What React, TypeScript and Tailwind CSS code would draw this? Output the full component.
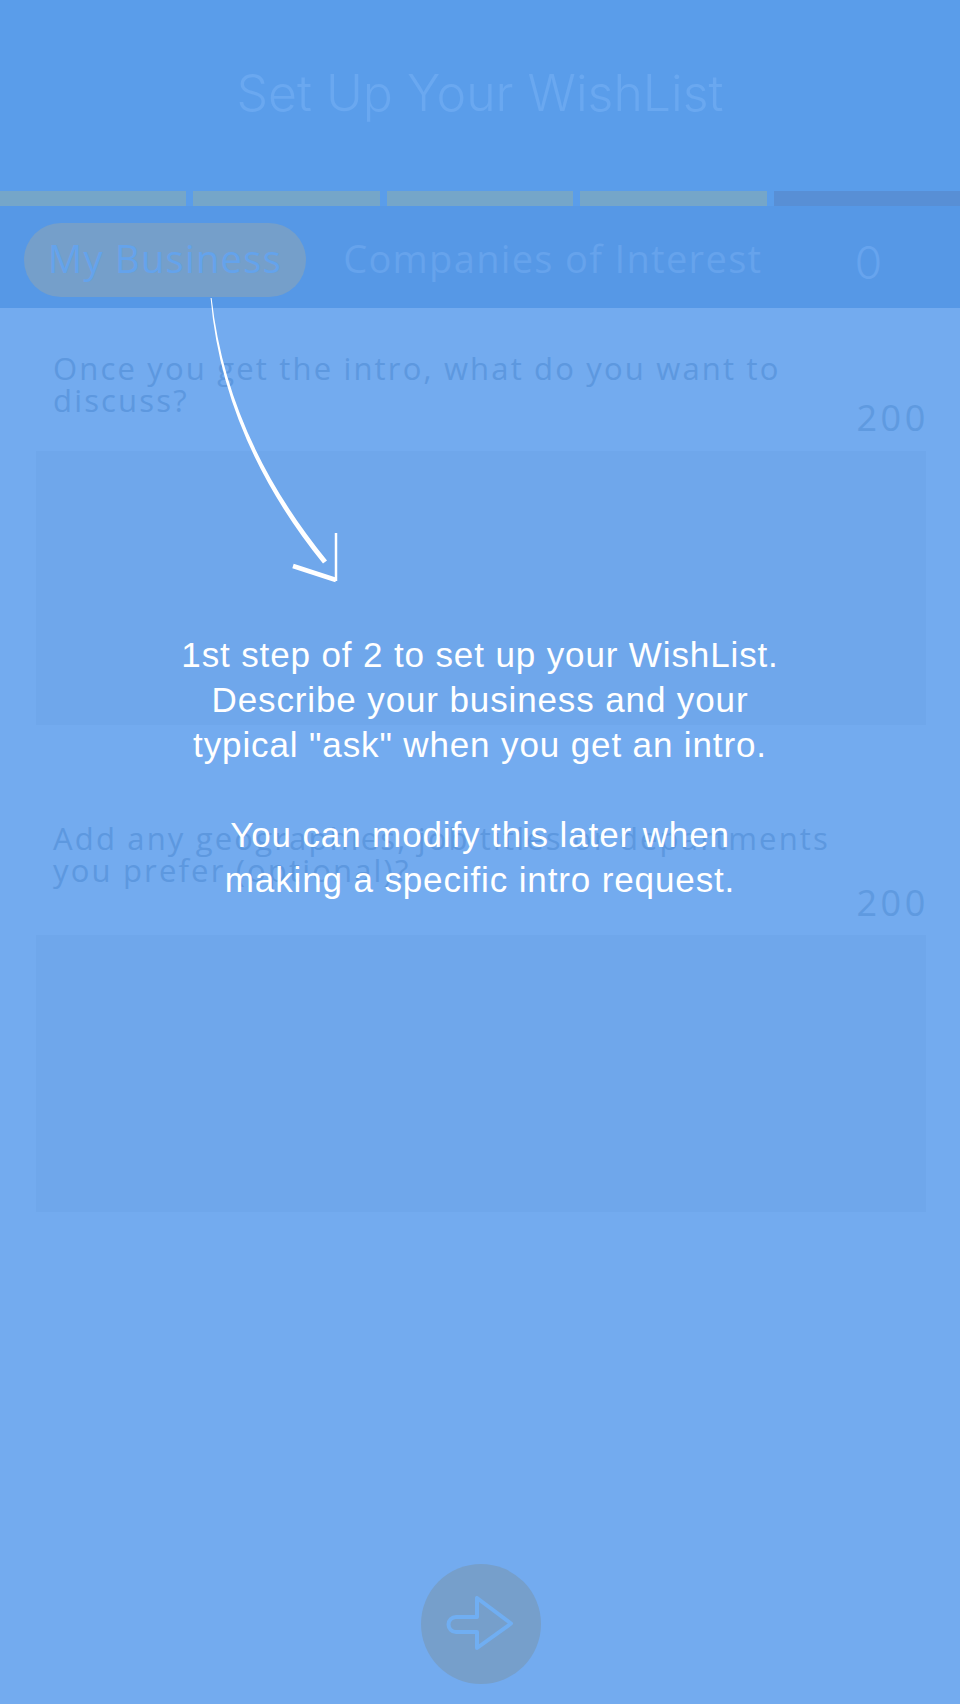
import { ReactNode } from "react"

const gotham = { fontFamily: '"Open Sans", "Noto Sans", sans-serif' }

function ProgressBar() {
  const done = [true, true, true, true, false]
  return (
    <div className="grid h-[15px] grid-cols-5 gap-[7px] bg-[#5a9dea]">
      {done.map((d, i) => (
        <div key={i} className={d ? "bg-[#75a6c9]" : "bg-[#588fd5]"} />
      ))}
    </div>
  )
}

function Tab({ active, children }: { active?: boolean; children: ReactNode }) {
  return (
    <div
      className={
        "flex h-[74px] items-center rounded-full px-[24px] pb-[4px] text-[38px] leading-none tracking-[0.035em] whitespace-nowrap " +
        (active ? "bg-[#759fca] text-[#64a3ec]" : "text-[#66a3ec]")
      }
      style={gotham}
    >
      {children}
    </div>
  )
}

function Question({ lines, counterTop }: { lines: string[]; counterTop: string }) {
  return (
    <div className="flex justify-between" style={gotham}>
      <p className="pl-[17px] text-[31px] leading-[32px] tracking-[0.07em] text-[#5d98df] whitespace-nowrap">
        {lines.map((l, i) => (
          <span key={i} className="block">
            {l}
          </span>
        ))}
      </p>
      <span className={"mr-[-3px] text-[36px] leading-[32px] tracking-[0.1em] text-[#5f9ae0] " + counterTop}>
        200
      </span>
    </div>
  )
}

function CoachArrow() {
  return (
    <svg className="absolute left-0 top-0 h-[600px] w-[960px]" viewBox="0 0 960 600" fill="none">
      <path
        d="M210.6 298 Q 223 440 323 563.5 L 327 560.5 Q 227 438 211.6 298 Z"
        fill="#ffffff"
      />
      <path d="M293 566 L336 580" stroke="#ffffff" strokeWidth="4.5" />
      <path d="M336 533 L336 581" stroke="#ffffff" strokeWidth="2.5" />
    </svg>
  )
}

export default function App() {
  return (
    <div className="relative flex min-h-[1704px] w-full flex-col bg-[#73abef]">
      <header className="flex h-[191px] justify-center bg-[#5a9dea] pt-[68px]">
        <h1
          className="text-[50px] font-light leading-none text-[#6aa8f0]"
          style={{ fontFamily: 'Inter, "Liberation Sans", sans-serif' }}
        >
          Set Up Your WishList
        </h1>
      </header>

      <ProgressBar />

      <nav className="flex h-[102px] items-start bg-[#5698e6] pl-[24px] pt-[17px]">
        <Tab active>My Business</Tab>
        <div className="ml-[13px]">
          <Tab>Companies of Interest</Tab>
        </div>
        <span
          className="ml-[68px] mt-[17px] text-[45px] font-light leading-none text-[#67a4ee]"
          style={{ fontFamily: 'Inter, "Liberation Sans", sans-serif' }}
        >
          0
        </span>
      </nav>

      <main className="flex flex-1 flex-col pl-[36px] pr-[34px]">
        <div className="mt-[44px]">
          <Question
            lines={["Once you get the intro, what do you want to", "discuss?"]}
            counterTop="mt-[50px]"
          />
        </div>
        <div className="mt-[17px] h-[274px] bg-[#6fa7eb]" />

        <div className="mt-[97px]">
          <Question
            lines={["Add any geographies, job titles or departments", "you prefer (optional)?"]}
            counterTop="mt-[65px]"
          />
        </div>
        <div className="mt-[16px] h-[277px] bg-[#6fa7eb]" />

        <div className="flex-1" />
        <div className="mb-[20px] flex justify-center">
          <button className="flex h-[120px] w-[120px] items-center justify-center rounded-full bg-[#769fcb]">
            <svg width="70" height="56" viewBox="0 0 70 56" fill="none">
              <path
                d="M31 21 H10 a7.5 7.5 0 0 0 0 15 H31 V52 L65 27.5 L31 2 Z"
                stroke="#70aef2"
                strokeWidth="4"
                strokeLinejoin="round"
              />
            </svg>
          </button>
        </div>
      </main>

      {/* coach mark overlay */}
      <div className="pointer-events-none absolute inset-0">
        <CoachArrow />
        <p
          className="absolute left-0 right-0 top-[632px] text-center text-[35px] leading-[45px] tracking-[0.025em] text-white whitespace-nowrap"
          style={{ fontFamily: '"Liberation Sans", Arial, sans-serif' }}
        >
          1st step of 2 to set up your WishList.
          <br />
          Describe your business and your
          <br />
          typical "ask" when you get an intro.
          <br />
          <br />
          You can modify this later when
          <br />
          making a specific intro request.
        </p>
      </div>
    </div>
  )
}
